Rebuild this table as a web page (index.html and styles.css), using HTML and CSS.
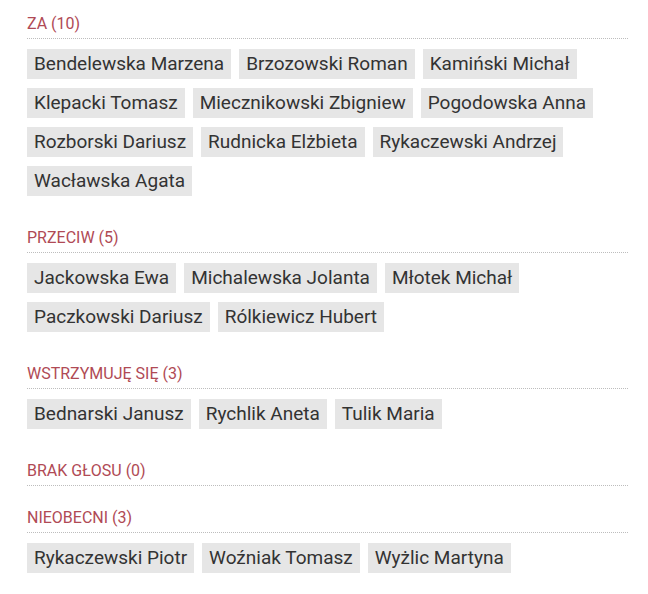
FILE: index.html
```html
<!DOCTYPE html>
<html lang="pl">
<head>
<meta charset="utf-8">
<link rel="stylesheet" href="styles.css">
</head>
<body>
<div class="votes">
  <section class="group">
    <h3 class="group-title">ZA (10)</h3>
    <ul class="names">
      <li class="name">Bendelewska Marzena</li>
      <li class="name">Brzozowski Roman</li>
      <li class="name">Kamiński Michał</li>
      <li class="name">Klepacki Tomasz</li>
      <li class="name">Miecznikowski Zbigniew</li>
      <li class="name">Pogodowska Anna</li>
      <li class="name">Rozborski Dariusz</li>
      <li class="name">Rudnicka Elżbieta</li>
      <li class="name">Rykaczewski Andrzej</li>
      <li class="name">Wacławska Agata</li>
    </ul>
  </section>
  <section class="group">
    <h3 class="group-title">PRZECIW (5)</h3>
    <ul class="names">
      <li class="name">Jackowska Ewa</li>
      <li class="name">Michalewska Jolanta</li>
      <li class="name">Młotek Michał</li>
      <li class="name">Paczkowski Dariusz</li>
      <li class="name">Rólkiewicz Hubert</li>
    </ul>
  </section>
  <section class="group">
    <h3 class="group-title">WSTRZYMUJĘ SIĘ (3)</h3>
    <ul class="names">
      <li class="name">Bednarski Janusz</li>
      <li class="name">Rychlik Aneta</li>
      <li class="name">Tulik Maria</li>
    </ul>
  </section>
  <section class="group">
    <h3 class="group-title">BRAK GŁOSU (0)</h3>
  </section>
  <section class="group">
    <h3 class="group-title">NIEOBECNI (3)</h3>
    <ul class="names">
      <li class="name">Rykaczewski Piotr</li>
      <li class="name">Woźniak Tomasz</li>
      <li class="name">Wyżlic Martyna</li>
    </ul>
  </section>
</div>
</body>
</html>
```

FILE: styles.css
```css
html, body {
  margin: 0;
  padding: 0;
  background: #ffffff;
}

body {
  font-family: Roboto, "Liberation Sans", sans-serif;
  color: #333333;
}

.votes {
  width: 601px;
  padding: 14px 0 0 27px;
}

.group {
  margin-bottom: 22px;
}

.group-title {
  margin: 0;
  font-size: 16px;
  line-height: 20px;
  font-weight: 400;
  color: #b04a55;
  padding-bottom: 4px;
  border-bottom: 1px dotted #bdbdbd;
}

.names {
  list-style: none;
  margin: 10px 0 0 0;
  padding: 0;
  display: flex;
  flex-wrap: wrap;
}

.name {
  background: #e6e6e6;
  color: #333333;
  font-size: 19px;
  line-height: 30px;
  height: 30px;
  padding: 0 7px;
  margin: 0 8px 9px 0;
}

.name:last-child {
  margin-bottom: 10px;
}
```
